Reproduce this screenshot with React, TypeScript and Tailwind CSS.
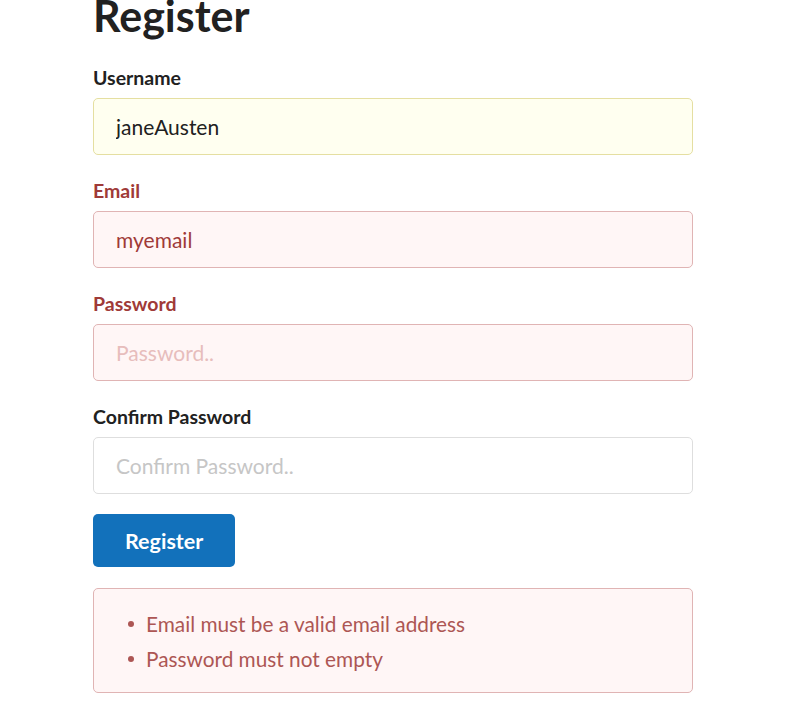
const inputBase =
  "block w-full rounded-[5px] border px-[22px] py-[14px] text-[21px] leading-[27px] outline-none font-['Lato',sans-serif]";

const Field = ({
  label,
  error,
  children,
}: {
  label: string;
  error?: boolean;
  children: React.ReactNode;
}) => (
  <div className="mb-[23px]">
    <label
      className={`mb-[7px] block text-[19.5px] font-bold leading-[26px] ${
        error ? 'text-[#9f3a38]' : 'text-[#212121]'
      }`}
    >
      {label}
    </label>
    {children}
  </div>
);

const App = () => {
  return (
    <div className="min-h-[717px] w-full overflow-hidden bg-white font-['Lato',sans-serif]">
      <div className="ml-[93px] w-[600px]">
        <h1 className="-mt-[11px] mb-[22px] text-[43px] font-bold leading-[54px] text-[#212121]">
          Register
        </h1>

        <form>
          <Field label="Username">
            <input
              readOnly
              value="janeAusten"
              className={`${inputBase} border-[#e5dfa1] bg-[#fffff0] text-[#212121]`}
            />
          </Field>

          <Field label="Email" error>
            <input
              readOnly
              value="myemail"
              className={`${inputBase} border-[#e0b4b4] bg-[#fff6f6] text-[#9f3a38]`}
            />
          </Field>

          <Field label="Password" error>
            <input
              readOnly
              type="password"
              placeholder="Password.."
              className={`${inputBase} border-[#e0b4b4] bg-[#fff6f6] text-[#9f3a38] placeholder:text-[#e7bdbc]`}
            />
          </Field>

          <div className="mb-[20px]">
            <label className="mb-[7px] block text-[19.5px] font-bold leading-[26px] text-[#212121]">
              Confirm Password
            </label>
            <input
              readOnly
              type="password"
              placeholder="Confirm Password.."
              className={`${inputBase} border-[#dedede] bg-white text-[#212121] placeholder:text-[#c6c6c6]`}
            />
          </div>

          <button
            type="button"
            className="rounded-[5px] bg-[#1271bb] pb-[15px] pt-[17px] px-[32px] text-[21.5px] font-bold leading-[21px] text-white"
          >
            Register
          </button>

          <div className="mt-[21px] rounded-[5px] border border-[#e0b4b4] bg-[#fff6f6] px-[32px] pb-[18px] pt-[20px] text-[20.8px] leading-[30px] text-[#ad5654]">
            <ul className="flex flex-col gap-[5px]">
              <li className="flex items-center">
                <span className="ml-[2px] mr-[12px] h-[6px] w-[6px] rounded-full bg-[#ad5654]" />
                Email must be a valid email address
              </li>
              <li className="flex items-center">
                <span className="ml-[2px] mr-[12px] h-[6px] w-[6px] rounded-full bg-[#ad5654]" />
                Password must not empty
              </li>
            </ul>
          </div>
        </form>
      </div>
    </div>
  );
};

export default App;
